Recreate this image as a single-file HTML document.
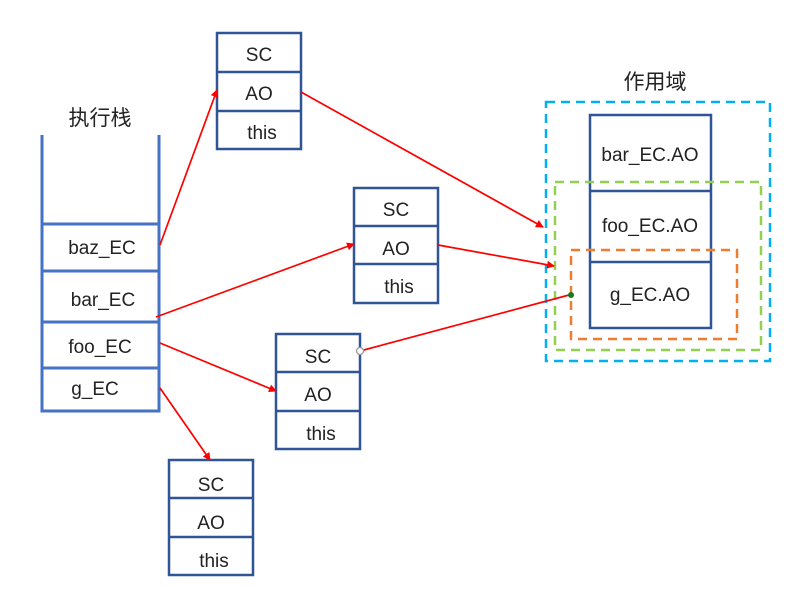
<!DOCTYPE html>
<html><head><meta charset="utf-8"><style>
html,body{margin:0;padding:0;background:#fff;}
svg{display:block;}
text{font-family:"Liberation Sans","Noto Sans CJK SC",sans-serif;fill:#222;text-anchor:middle;}
</style></head><body>
<svg width="800" height="589" viewBox="0 0 800 589" xmlns="http://www.w3.org/2000/svg">
<defs>
<marker id="ar" markerWidth="8" markerHeight="8" refX="7" refY="4" orient="auto" markerUnits="userSpaceOnUse">
<path d="M0,0 L8,4 L0,8 z" fill="#ff0000"/>
</marker>
</defs>
<text x="100" y="125" font-size="21">执行栈</text>
<text x="655" y="89" font-size="21">作用域</text>
<g stroke="#4472c4" stroke-width="3" fill="none">
<path d="M42,135 V411 H159 V135"/>
<path d="M42,224 H159 M42,271 H159 M42,322 H159 M42,368 H159"/>
</g>
<g font-size="19">
<text x="102" y="254">baz_EC</text>
<text x="103" y="306">bar_EC</text>
<text x="100" y="353">foo_EC</text>
<text x="95" y="395">g_EC</text>
</g>
<g stroke="#2f5597" stroke-width="2.5" fill="#fff">
<rect x="217" y="33" width="84" height="116"/><path d="M217,72H301M217,111H301"/>
<rect x="354" y="188" width="84" height="115"/><path d="M354,226H438M354,264H438"/>
<rect x="276" y="334" width="84" height="115"/><path d="M276,372H360M276,411H360"/>
<rect x="169" y="460" width="84" height="115"/><path d="M169,498H253M169,537H253"/>
</g>
<g font-size="19">
<text x="259" y="61">SC</text><text x="259" y="100">AO</text><text x="262" y="139">this</text>
<text x="396" y="216">SC</text><text x="396" y="255">AO</text><text x="399" y="293">this</text>
<text x="318" y="363">SC</text><text x="318" y="401">AO</text><text x="321" y="440">this</text>
<text x="211" y="491">SC</text><text x="211" y="529">AO</text><text x="214" y="567">this</text>
</g>
<rect x="546" y="102" width="224" height="259" fill="none" stroke="#00b0f0" stroke-width="2.5" stroke-dasharray="9,6"/>
<rect x="590" y="115" width="121" height="213" fill="#fff" stroke="#2f5597" stroke-width="2.5"/>
<path d="M590,191H711M590,262H711" stroke="#2f5597" stroke-width="2.5"/>
<rect x="555" y="182" width="206" height="168" fill="none" stroke="#92d050" stroke-width="2.5" stroke-dasharray="9,6"/>
<rect x="571" y="250" width="166" height="89" fill="none" stroke="#ed7d31" stroke-width="2.5" stroke-dasharray="9,6"/>
<g font-size="19">
<text x="650" y="161">bar_EC.AO</text>
<text x="650" y="232">foo_EC.AO</text>
<text x="650" y="301">g_EC.AO</text>
</g>
<g stroke="#ff0000" stroke-width="1.7" fill="none" marker-end="url(#ar)">
<path d="M160,245 L217,90"/>
<path d="M301,92 L543,227"/>
<path d="M156,317 L354,244"/>
<path d="M438,245 L554,266"/>
<path d="M160,343 L276,391"/>
<path d="M160,388 L210,460"/>
</g>
<path d="M360,351 L569,295" stroke="#ff0000" stroke-width="1.7"/>
<circle cx="360" cy="351" r="3.5" fill="#fff" stroke="#999" stroke-width="1.3"/>
<circle cx="571" cy="295" r="3" fill="#1a7a1a"/>
</svg>
</body></html>
